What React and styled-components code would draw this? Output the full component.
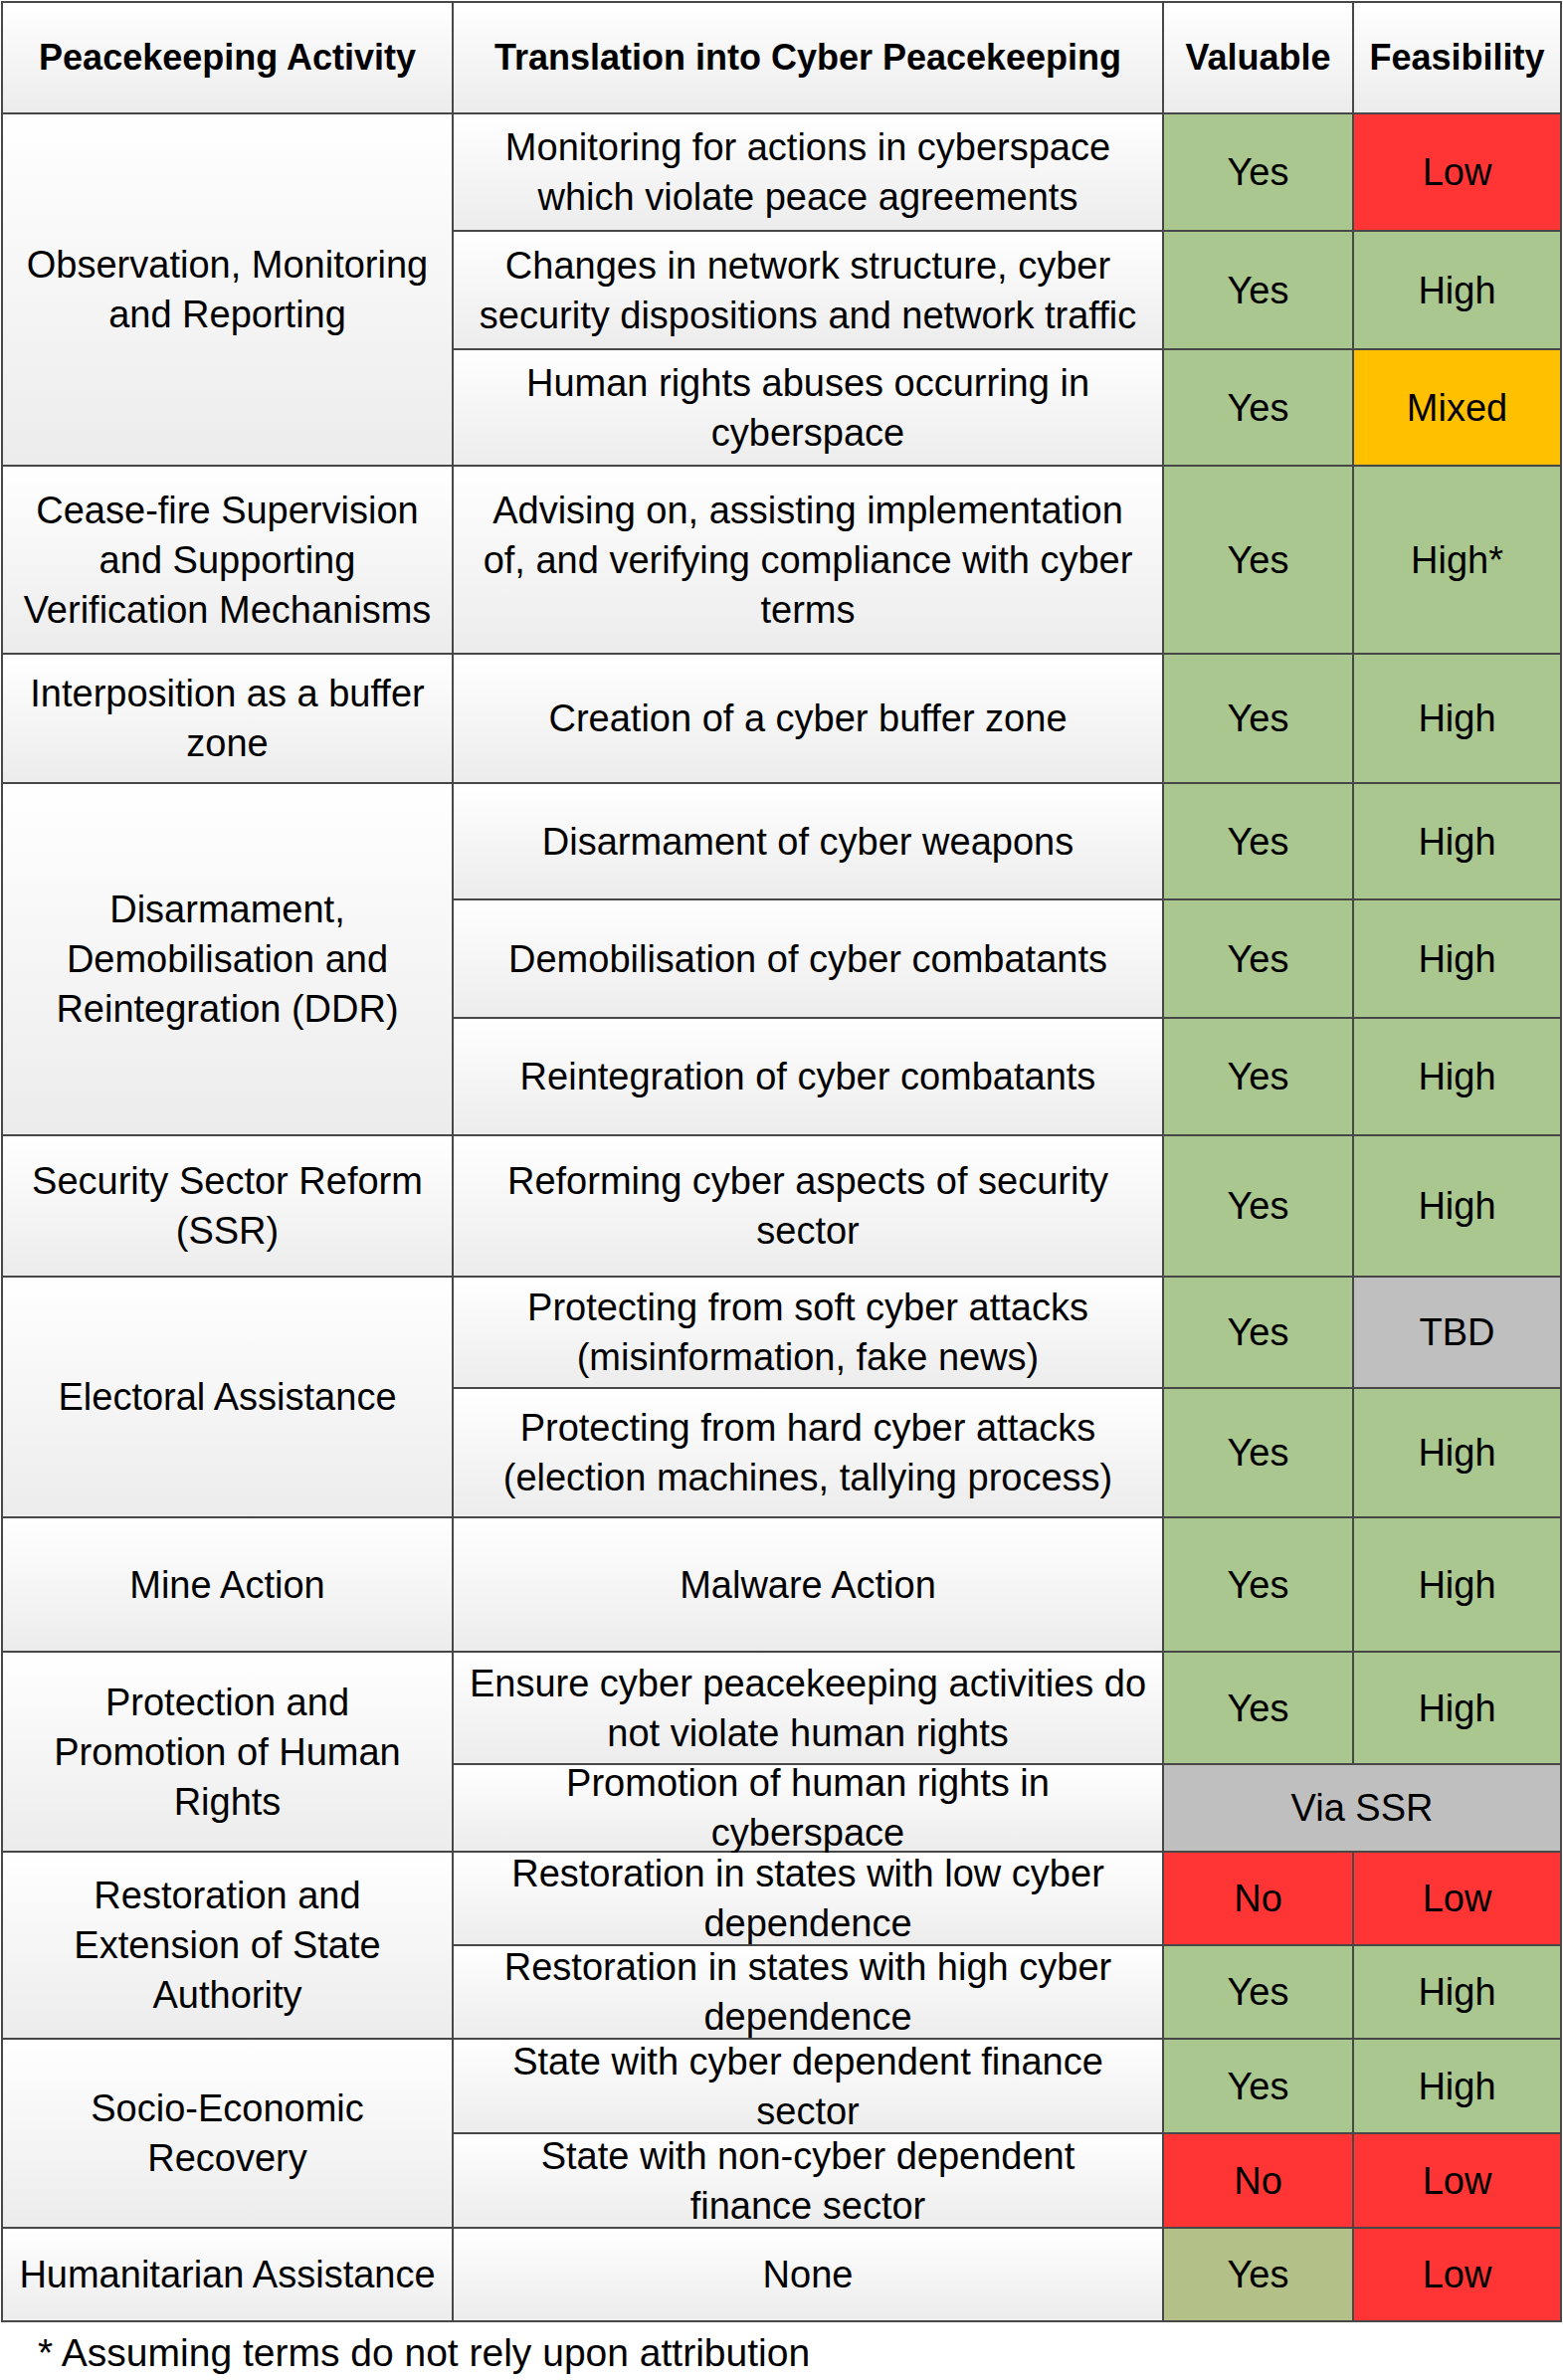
import React from "react";
import styled, { createGlobalStyle, css } from "styled-components";

const GlobalStyle = createGlobalStyle`
  html, body {
    margin: 0;
    padding: 0;
    background: #ffffff;
  }
  body {
    font-family: "Liberation Sans", Arial, sans-serif;
    color: #000000;
  }
`;

const Page = styled.div`
  padding: 1px 0 0 1px;
  width: 1571px;
  box-sizing: border-box;
`;

const Table = styled.div`
  display: grid;
  width: max-content;
  grid-template-columns: 451px 712px 189px 207px;
  grid-template-rows: ${(p) => p.$rows.map((h) => `${h}px`).join(" ")};
  gap: 2px;
  border: 2px solid #474747;
  background: #474747;
`;

const tones = {
  plain: css`
    background: linear-gradient(180deg, #ffffff 0%, #ececec 100%);
  `,
  green: css`
    background: #a9c78f;
  `,
  olive: css`
    background: #b3c087;
  `,
  red: css`
    background: #ff3535;
  `,
  orange: css`
    background: #ffc000;
  `,
  gray: css`
    background: #bfbfbf;
  `,
};

const Cell = styled.div`
  display: flex;
  align-items: center;
  justify-content: center;
  text-align: center;
  white-space: pre;
  overflow: visible;
  min-height: 0;
  font-size: ${(p) => (p.$head ? "36px" : "38px")};
  font-weight: ${(p) => (p.$head ? 700 : 400)};
  line-height: 50px;
  grid-row: span ${(p) => p.$rowSpan || 1};
  grid-column: span ${(p) => p.$colSpan || 1};
  ${(p) => tones[p.$tone || "plain"]}
`;

const Footnote = styled.p`
  margin: 0;
  padding: 6px 0 0 37px;
  font-size: 39px;
  line-height: 50px;
`;

const rowHeights = [
  110, 116, 117, 115, 187, 128, 115, 117, 116, 140, 110, 128, 133, 111, 86, 92,
  92, 93, 93, 92,
];

const Y = { text: "Yes", tone: "green" };
const H = { text: "High", tone: "green" };
const Lo = { text: "Low", tone: "red" };
const N = { text: "No", tone: "red" };

const rows = [
  [
    { text: "Peacekeeping Activity", head: true },
    { text: "Translation into Cyber Peacekeeping", head: true },
    { text: "Valuable", head: true },
    { text: "Feasibility", head: true },
  ],
  [
    { text: "Observation, Monitoring\nand Reporting", rowSpan: 3 },
    { text: "Monitoring for actions in cyberspace\nwhich violate peace agreements" },
    Y,
    Lo,
  ],
  [
    {
      text: "Changes in network structure, cyber\nsecurity dispositions and network traffic",
    },
    Y,
    H,
  ],
  [
    { text: "Human rights abuses occurring in\ncyberspace" },
    Y,
    { text: "Mixed", tone: "orange" },
  ],
  [
    { text: "Cease-fire Supervision\nand Supporting\nVerification Mechanisms" },
    {
      text: "Advising on, assisting implementation\nof, and verifying compliance with cyber\nterms",
    },
    Y,
    { text: "High*", tone: "green" },
  ],
  [
    { text: "Interposition as a buffer\nzone" },
    { text: "Creation of a cyber buffer zone" },
    Y,
    H,
  ],
  [
    { text: "Disarmament,\nDemobilisation and\nReintegration (DDR)", rowSpan: 3 },
    { text: "Disarmament of cyber weapons" },
    Y,
    H,
  ],
  [{ text: "Demobilisation of cyber combatants" }, Y, H],
  [{ text: "Reintegration of cyber combatants" }, Y, H],
  [
    { text: "Security Sector Reform\n(SSR)" },
    { text: "Reforming cyber aspects of security\nsector" },
    Y,
    H,
  ],
  [
    { text: "Electoral Assistance", rowSpan: 2 },
    { text: "Protecting from soft cyber attacks\n(misinformation, fake news)" },
    Y,
    { text: "TBD", tone: "gray" },
  ],
  [
    { text: "Protecting from hard cyber attacks\n(election machines, tallying process)" },
    Y,
    H,
  ],
  [{ text: "Mine Action" }, { text: "Malware Action" }, Y, H],
  [
    { text: "Protection and\nPromotion of Human\nRights", rowSpan: 2 },
    { text: "Ensure cyber peacekeeping activities do\nnot violate human rights" },
    Y,
    H,
  ],
  [
    { text: "Promotion of human rights in\ncyberspace" },
    { text: "Via SSR", tone: "gray", colSpan: 2 },
  ],
  [
    { text: "Restoration and\nExtension of State\nAuthority", rowSpan: 2 },
    { text: "Restoration in states with low cyber\ndependence" },
    N,
    Lo,
  ],
  [{ text: "Restoration in states with high cyber\ndependence" }, Y, H],
  [
    { text: "Socio-Economic\nRecovery", rowSpan: 2 },
    { text: "State with cyber dependent finance\nsector" },
    Y,
    H,
  ],
  [{ text: "State with non-cyber dependent\nfinance sector" }, N, Lo],
  [
    { text: "Humanitarian Assistance" },
    { text: "None" },
    { text: "Yes", tone: "olive" },
    Lo,
  ],
];

export default function App() {
  return (
    <Page>
      <GlobalStyle />
      <Table $rows={rowHeights}>
        {rows.flatMap((row, r) =>
          row.map((cell, c) => (
            <Cell
              key={`${r}-${c}`}
              $head={cell.head}
              $tone={cell.tone}
              $rowSpan={cell.rowSpan}
              $colSpan={cell.colSpan}
            >
              {cell.text}
            </Cell>
          ))
        )}
      </Table>
      <Footnote>* Assuming terms do not rely upon attribution</Footnote>
    </Page>
  );
}
